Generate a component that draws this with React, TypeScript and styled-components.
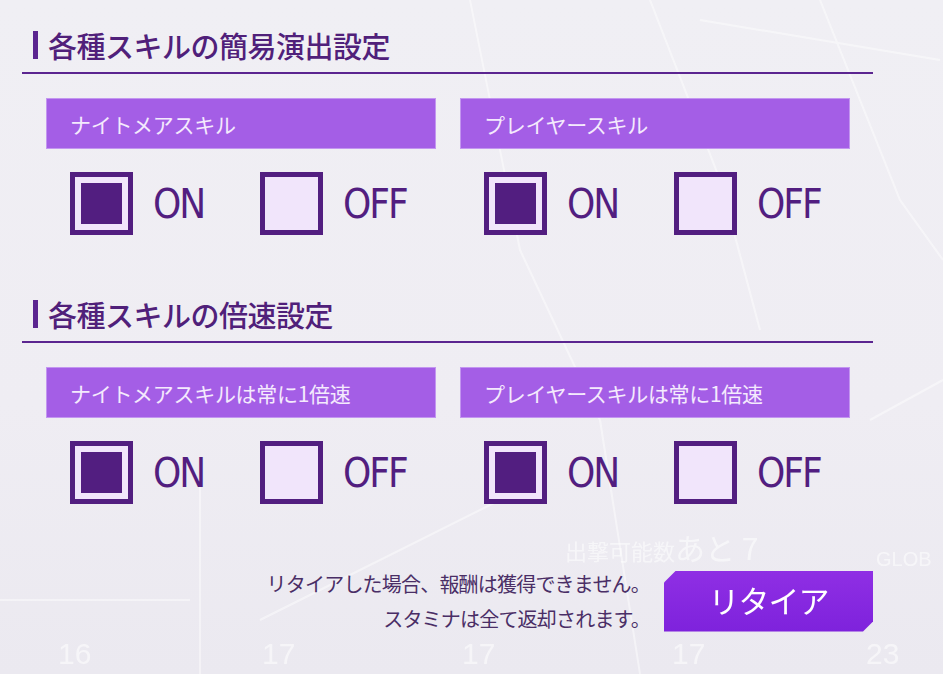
import React from 'react';
import styled, { createGlobalStyle } from 'styled-components';

const GlobalStyle = createGlobalStyle`
  html, body {
    margin: 0;
    padding: 0;
    background: #efeef3;
  }
  body {
    font-family: "Noto Sans CJK JP", "Noto Sans", sans-serif;
  }
`;

interface ToggleGroup {
  label: string;
  on: boolean;
}

interface Section {
  title: string;
  groups: ToggleGroup[];
}

const sections: Section[] = [
  {
    title: '各種スキルの簡易演出設定',
    groups: [
      { label: 'ナイトメアスキル', on: true },
      { label: 'プレイヤースキル', on: true },
    ],
  },
  {
    title: '各種スキルの倍速設定',
    groups: [
      { label: 'ナイトメアスキルは常に1倍速', on: true },
      { label: 'プレイヤースキルは常に1倍速', on: true },
    ],
  },
];

// faint game scenery showing through the settings panel
const Backdrop = () => (
  <BackdropSvg width="943" height="674" viewBox="0 0 943 674">
    <g stroke="#ffffff" strokeWidth="2" fill="none" opacity="0.45">
      <path d="M470 0 L520 250 L600 420 L640 674" />
      <path d="M650 0 L720 180 L760 330" />
      <path d="M700 20 L940 60" />
      <path d="M820 0 L900 200 L943 260" />
      <path d="M200 470 L200 674" />
      <path d="M0 600 L190 600" />
      <path d="M260 620 L500 500" />
      <path d="M870 420 L943 380" />
    </g>
    <g fill="#ffffff" opacity="0.55" fontFamily="'Liberation Sans', sans-serif">
      <text x="565" y="560" fontSize="22" fontFamily="'Noto Sans CJK JP', sans-serif">出撃可能数</text>
      <text x="675" y="560" fontSize="30" fontFamily="'Noto Sans CJK JP', sans-serif">あと 7</text>
      <text x="876" y="566" fontSize="20">GLOB</text>
      <text x="58" y="664" fontSize="30">16</text>
      <text x="262" y="664" fontSize="30">17</text>
      <text x="462" y="664" fontSize="30">17</text>
      <text x="672" y="664" fontSize="30">17</text>
      <text x="866" y="664" fontSize="30">23</text>
    </g>
  </BackdropSvg>
);

const Checkbox: React.FC<{ checked: boolean; text: string }> = ({ checked, text }) => (
  <Option>
    <Box>
      <Fill $checked={checked} />
    </Box>
    <OptionText>{text}</OptionText>
  </Option>
);

const App: React.FC = () => {
  return (
    <>
      <GlobalStyle />
      <Page>
        <Backdrop />
        <Content>
          {sections.map(section => (
            <SectionBlock key={section.title}>
              <Heading>
                <HeadingMark />
                {section.title}
              </Heading>
              <Columns>
                {section.groups.map(group => (
                  <Column key={group.label}>
                    <Bar>{group.label}</Bar>
                    <Options>
                      <Checkbox checked={group.on} text="ON" />
                      <Checkbox checked={!group.on} text="OFF" />
                    </Options>
                  </Column>
                ))}
              </Columns>
            </SectionBlock>
          ))}
          <Footer>
            <Notice>
              <span>リタイアした場合、報酬は獲得できません。</span>
              <span>スタミナは全て返却されます。</span>
            </Notice>
            <RetireButton>リタイア</RetireButton>
          </Footer>
        </Content>
      </Page>
    </>
  );
};

const Page = styled.div`
  position: relative;
  width: 943px;
  height: 674px;
  overflow: hidden;
  background: linear-gradient(180deg, #f0eff4 0%, #efedf3 60%, #ebe9f0 100%);
`;

const BackdropSvg = styled.svg`
  position: absolute;
  left: 0;
  top: 0;
  pointer-events: none;
`;

const Content = styled.div`
  position: relative;
  width: 851px;
  padding: 30px 0 0 22px;
  display: flex;
  flex-direction: column;
`;

const SectionBlock = styled.section`
  display: flex;
  flex-direction: column;
  & + & {
    margin-top: 64px;
  }
`;

const Heading = styled.h2`
  margin: 0;
  display: flex;
  align-items: center;
  gap: 10px;
  padding: 0 0 12px 11px;
  height: 30px;
  border-bottom: 2px solid #5b2590;
  font-size: 29px;
  line-height: 30px;
  font-weight: 500;
  letter-spacing: -0.5px;
  color: #50207a;
`;

const HeadingMark = styled.span`
  width: 5px;
  height: 28px;
  background: #5b2590;
`;

const Columns = styled.div`
  display: grid;
  grid-template-columns: 390px 390px;
  column-gap: 24px;
  padding-left: 24px;
  margin-top: 24px;
`;

const Column = styled.div`
  display: flex;
  flex-direction: column;
`;

const Bar = styled.div`
  box-sizing: border-box;
  height: 51px;
  display: flex;
  align-items: center;
  padding-left: 23px;
  background: #a45ee6;
  border: 1px solid #c396f0;
  color: #f4eafd;
  font-size: 21px;
  letter-spacing: -0.3px;
`;

const Options = styled.div`
  display: flex;
  gap: 43px;
  margin-top: 23px;
  padding-left: 24px;
`;

const Option = styled.div`
  display: flex;
  align-items: center;
  gap: 20px;
`;

const Box = styled.div`
  box-sizing: border-box;
  width: 63px;
  height: 63px;
  border: 5px solid #521e80;
  background: #f1e5fb;
  display: flex;
  align-items: center;
  justify-content: center;
`;

const Fill = styled.div<{ $checked: boolean }>`
  width: 41px;
  height: 41px;
  background: ${({ $checked }) => ($checked ? '#521e80' : 'transparent')};
`;

const OptionText = styled.span`
  width: 64px;
  font-family: "DejaVu Sans Condensed", "DejaVu Sans", sans-serif;
  font-size: 40px;
  letter-spacing: -2px;
  color: #521e80;
`;

const Footer = styled.div`
  display: flex;
  justify-content: flex-end;
  align-items: center;
  gap: 14px;
  margin-top: 62px;
`;

const Notice = styled.div`
  display: flex;
  flex-direction: column;
  align-items: flex-end;
  font-size: 20px;
  line-height: 35px;
  letter-spacing: -0.8px;
  color: #4a2e66;
`;

const RetireButton = styled.button`
  width: 209px;
  height: 61px;
  border: none;
  padding: 0 0 3px;
  font-family: "Noto Sans CJK JP", sans-serif;
  font-size: 31px;
  letter-spacing: -1px;
  color: #ffffff;
  background: linear-gradient(180deg, #8f2fe4 0%, #7e22dc 100%);
  clip-path: polygon(12px 0, 100% 0, 100% calc(100% - 10px), calc(100% - 10px) 100%, 0 100%, 0 12px);
  filter: drop-shadow(4px 4px 0 #6b6478);
  cursor: pointer;
`;

export default App;
